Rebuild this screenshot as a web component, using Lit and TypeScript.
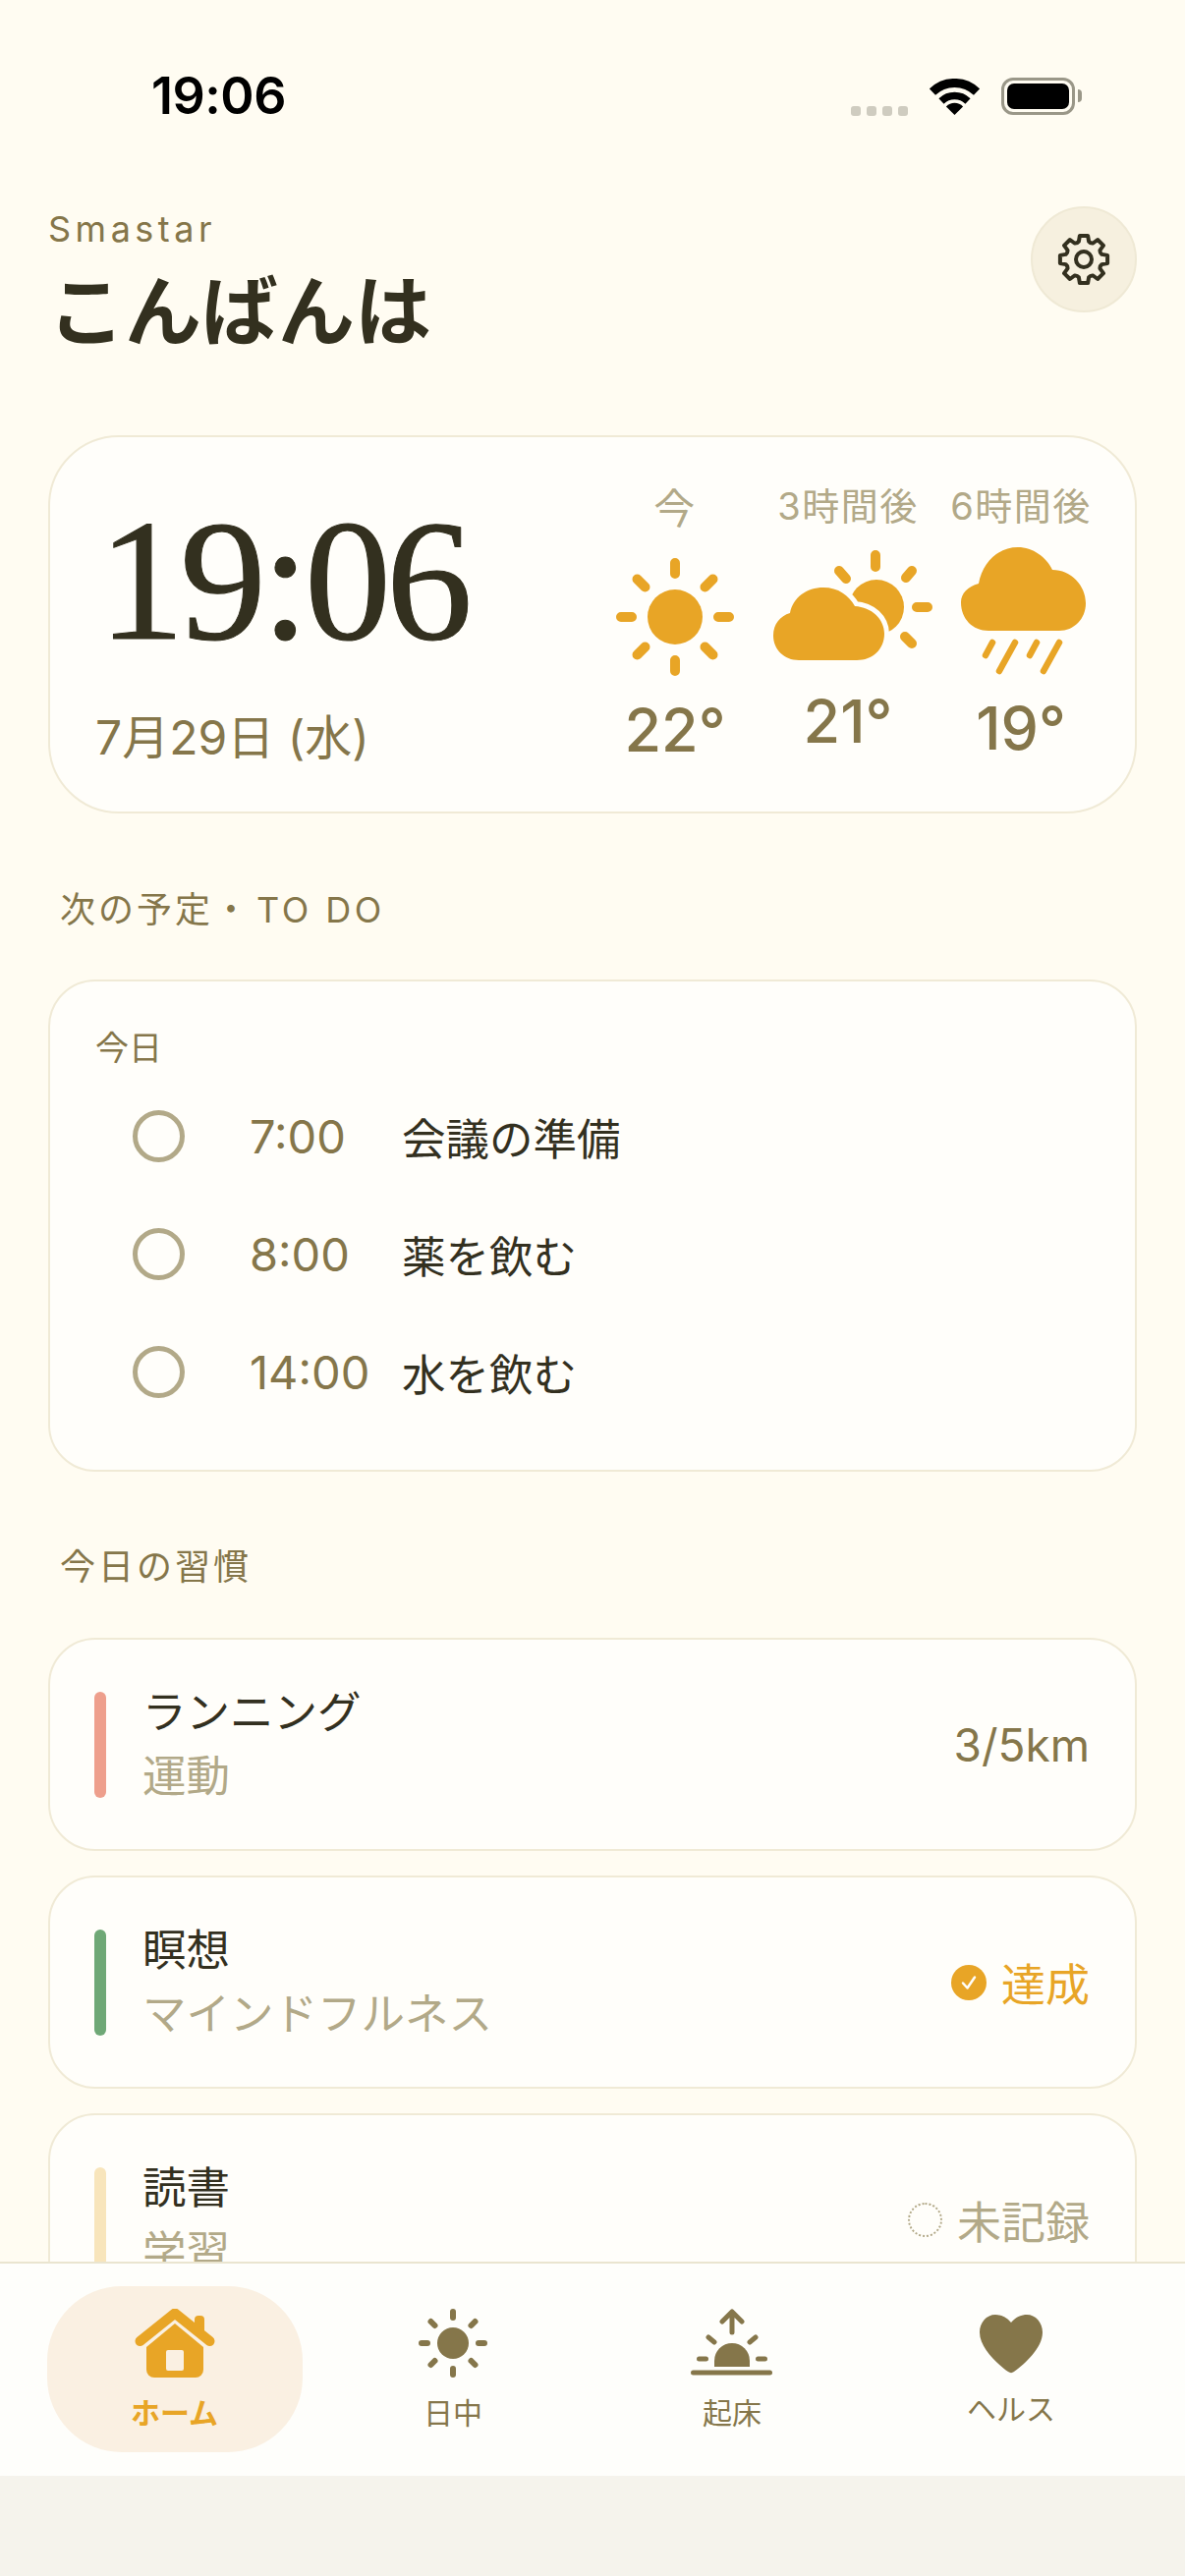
import { LitElement, css, html, svg } from 'lit';
import { customElement } from 'lit/decorators.js';

const forecast = [
  { label: '今', temp: '22°', cls: 'f-now', box: '619 555 136 135' },
  { label: '3時間後', temp: '21°', cls: 'f-three', box: '795 555 136 135' },
  { label: '6時間後', temp: '19°', cls: 'f-six', box: '971 555 136 135' },
];

const todos = [
  { time: '7:00', text: '会議の準備' },
  { time: '8:00', text: '薬を飲む' },
  { time: '14:00', text: '水を飲む' },
];

const weatherIcons = [
  svg`<g stroke="#e8a526" stroke-width="10" stroke-linecap="round" fill="none">
      <path d="M687 573v11M687 672v11M632 628h11M731 628h11M648.500 589.500l8 8M717.500 658.500l8 8M725.500 589.500l-8 8M656.500 658.500l-8 8"/>
    </g>
    <circle cx="687" cy="628" r="28" fill="#e8a526"/>`,
  svg`<g stroke="#e8a526" stroke-width="10" stroke-linecap="round" fill="none">
      <path d="M891 565v12M933 618h11M928 581l-6 7M854 581l7 8M921 648l7 7"/>
    </g>
    <circle cx="892" cy="618" r="28" fill="#e8a526"/>
    <path d="M813 672C798 672 787 661 787 647C787 635 794 627 804 624C807 608 821 598 838 598C853 598 864 606 870 617C887 618 900 630 900 645C900 661 888 672 872 672Z" fill="#e8a526" stroke="#fffefa" stroke-width="10" paint-order="stroke"/>`,
  svg`<path d="M1006 642C990 642 978 630 978 613C978 604 985 597 996 594C1000 572 1016 557 1036 557C1051 557 1065 567 1071 580C1090 580 1105 596 1105 614C1105 630 1093 642 1078 642Z" fill="#e8a526"/>
    <path d="M1010 654l-7 13M1033 654l-16 29M1055 654l-7 13M1078 654l-16 29" stroke="#e8a526" stroke-width="6.500" stroke-linecap="round" fill="none"/>`,
];

// 8 tooth gear outline, centred on 27,27
function gearPath() {
  const pts: string[] = [];
  for (let i = 0; i < 8; i++) {
    const a = (i * Math.PI) / 4 - Math.PI / 2;
    const p = (r: number, d: number) =>
      `${(27 + r * Math.cos(a + d)).toFixed(1)} ${(27 + r * Math.sin(a + d)).toFixed(1)}`;
    pts.push(
      `${i === 0 ? 'M' : 'Q' + p(17.5, -Math.PI / 8) + ' '}${p(19, -0.27)}`,
      `L${p(24.5, -0.17)}`,
      `L${p(24.5, 0.17)}`,
      `L${p(19, 0.27)}`
    );
  }
  const a0 = -Math.PI / 2 - Math.PI / 8;
  const close = `Q${(27 + 17.5 * Math.cos(a0)).toFixed(1)} ${(27 + 17.5 * Math.sin(a0)).toFixed(1)} ${(27 + 19 * Math.cos(-Math.PI / 2 - 0.27)).toFixed(1)} ${(27 + 19 * Math.sin(-Math.PI / 2 - 0.27)).toFixed(1)}Z`;
  return pts.join('') + close;
}

@customElement('app-root')
export class AppRoot extends LitElement {
  static styles = css`
    :host {
      display: block;
      position: relative;
      width: 1206px;
      height: 2622px;
      overflow: hidden;
      background: #fffcf2;
      color: #33301f;
      font-family: Inter, 'Noto Sans CJK JP', sans-serif;
    }

    .status {
      display: flex;
      align-items: center;
      height: 196px;
      padding: 0 112px 0 154px;
      box-sizing: border-box;
    }

    .clock-small {
      font-size: 52px;
      font-weight: 600;
      color: #000;
      line-height: 60px;
      letter-spacing: -0.5px;
    }

    .status-right {
      margin-left: auto;
      display: flex;
      align-items: center;
    }

    .dots {
      display: flex;
      gap: 6px;
      margin: 30px 22px 0 0;
    }

    .dots span {
      width: 10px;
      height: 10px;
      border-radius: 3px;
      background: #cfccc0;
    }

    .battery {
      position: relative;
      width: 75px;
      height: 38px;
      margin-left: 22px;
      box-sizing: border-box;
      border: 3.500px solid #9a9788;
      border-radius: 12px;
      padding: 3px;
    }

    .battery i {
      display: block;
      height: 100%;
      border-radius: 7px;
      background: #000;
    }

    .battery::after {
      content: '';
      position: absolute;
      right: -10px;
      top: 9px;
      width: 4px;
      height: 13px;
      border-radius: 0 4px 4px 0;
      background: #9a9788;
    }

    main {
      padding: 0 49px;
    }

    header {
      display: flex;
      justify-content: space-between;
      align-items: flex-start;
      margin-top: 14px;
      height: 233px;
    }

    .brand {
      margin-top: 1px;
      font-size: 36px;
      line-height: 44px;
      letter-spacing: 4.500px;
      color: #85764a;
    }

    h1 {
      margin: 13px 0 0;
      font-size: 78px;
      line-height: 100px;
      font-weight: 700;
    }

    .gear {
      width: 108px;
      height: 108px;
      box-sizing: border-box;
      border-radius: 50%;
      background: #f6f0df;
      border: 2px solid #efe9d5;
      display: flex;
      align-items: center;
      justify-content: center;
    }

    .card {
      background: #fffefa;
      border: 2px solid #f0ead6;
      border-radius: 48px;
      box-sizing: border-box;
    }

    .hero {
      display: flex;
      justify-content: space-between;
      height: 385px;
      border-radius: 72px;
      padding: 0 48px 0 46px;
    }

    .big-time {
      margin: 41px 0 0 3px;
      font-family: 'Liberation Serif', serif;
      font-size: 176px;
      line-height: 210px;
      letter-spacing: -5px;
      -webkit-text-stroke: 1px #33301f;
      white-space: nowrap;
    }

    .date {
      margin-top: 25px;
      font-size: 48px;
      line-height: 60px;
      color: #85764a;
    }

    .forecast {
      display: flex;
      gap: 40px;
    }

    .slot {
      width: 136px;
      display: flex;
      flex-direction: column;
      align-items: center;
      padding-top: 45px;
    }

    .slot-label {
      height: 50px;
      font-size: 38px;
      line-height: 50px;
      letter-spacing: 1.500px;
      white-space: nowrap;
      color: #b2a988;
    }

    .f-now .slot-label {
      font-size: 42px;
      line-height: 56px;
    }

    .slot svg {
      margin-top: 15px;
      overflow: visible;
    }

    .slot-temp {
      font-size: 61px;
      line-height: 72px;
      font-weight: 500;
      color: #85764a;
    }

    .f-now .slot-temp {
      margin-top: 17px;
    }

    .f-three .slot-temp {
      margin-top: 8px;
    }

    .f-six .slot-temp {
      margin-top: 15px;
    }

    h2 {
      margin: 0;
      padding-left: 12px;
      font-size: 36px;
      line-height: 50px;
      font-weight: 400;
      letter-spacing: 3px;
      color: #85764a;
    }

    h2 span {
      margin-left: 5px;
      letter-spacing: 3.500px;
    }

    .next-title {
      margin-top: 73px;
    }

    .todo-card {
      height: 501px;
      margin-top: 46px;
      padding: 44px 46px 0;
    }

    .day {
      margin-bottom: 5px;
      font-size: 34px;
      line-height: 48px;
      color: #85764a;
    }

    .todo {
      display: flex;
      align-items: center;
      height: 120px;
      padding-left: 38px;
    }

    .radio {
      width: 53px;
      height: 53px;
      box-sizing: border-box;
      border-radius: 50%;
      border: 5px solid #b2a988;
      margin-right: 66px;
    }

    .todo-time {
      width: 155px;
      font-size: 47px;
      color: #85764a;
    }

    .todo-text {
      font-size: 44.500px;
    }

    .habit-title {
      margin-top: 72px;
    }

    .habits {
      display: flex;
      flex-direction: column;
      gap: 25px;
      margin-top: 47px;
    }

    .habit {
      display: flex;
      align-items: center;
      height: 217px;
      flex: none;
      padding: 0 46px 0 45px;
    }

    .bar {
      width: 12px;
      height: 108px;
      border-radius: 6px;
      margin-right: 37px;
    }

    .h-run .bar {
      background: #ee9f8c;
    }

    .h-calm .bar {
      background: #6fa876;
    }

    .h-read .bar {
      background: #f8e5bb;
    }

    .habit-name,
    .habit-sub {
      font-size: 44.500px;
      line-height: 65px;
    }

    .habit-sub {
      color: #b2a988;
    }

    .habit-state {
      margin-left: auto;
      display: flex;
      align-items: center;
      gap: 15px;
      font-size: 45px;
      color: #b2a988;
    }

    .habit-state.value {
      font-size: 46px;
      color: #85764a;
    }

    .habit-state.done {
      color: #e8a526;
    }

    .ring {
      width: 35px;
      height: 35px;
      box-sizing: border-box;
      border-radius: 50%;
      border: 2px dotted #b2a988;
    }

    .bottom {
      position: absolute;
      left: 0;
      right: 0;
      bottom: 0;
    }

    nav {
      display: grid;
      grid-template-columns: repeat(4, 284px);
      justify-content: center;
      height: 218px;
      box-sizing: border-box;
      padding-top: 23px;
      border-top: 2.500px solid #eae5d0;
      background: #fefefb;
    }

    .tab {
      justify-self: center;
      width: 260px;
      height: 169px;
      border-radius: 76px;
      display: flex;
      flex-direction: column;
      align-items: center;
      padding-top: 23px;
      box-sizing: border-box;
      color: #85764a;
      font-size: 30px;
      line-height: 40px;
    }

    .tab svg {
      display: block;
    }

    .tab span {
      margin-top: 16px;
    }

    .tab.active {
      margin-left: 1px;
      background: #faf0e2;
      color: #e8a526;
      font-weight: 600;
    }

    .tab.health span {
      margin-top: 12px;
    }

    .home-bar {
      height: 102px;
      background: #f5f3ec;
    }
  `;

  render() {
    return html`
      <div class="status">
        <div class="clock-small">19:06</div>
        <div class="status-right">
          <div class="dots"><span></span><span></span><span></span><span></span></div>
          <svg width="51" height="37" viewBox="0 0 51 37">
            <path d="M2.900 13.600A32.500 32.500 0 0 1 48.100 13.600" stroke="#000" stroke-width="9" fill="none"/>
            <path d="M12 23A19.500 19.500 0 0 1 39 23" stroke="#000" stroke-width="7.500" fill="none"/>
            <path d="M25.500 37L16.900 28.400A12 12 0 0 1 34.100 28.400Z" fill="#000"/>
          </svg>
          <div class="battery"><i></i></div>
        </div>
      </div>

      <main>
        <header>
          <div>
            <div class="brand">Smastar</div>
            <h1>こんばんは</h1>
          </div>
          <div class="gear">
            <svg width="54" height="54" viewBox="0 0 54 54" fill="none" stroke="#33301f" stroke-width="4" stroke-linejoin="round">
              <path d=${gearPath()}/>
              <circle cx="27" cy="27" r="8"/>
            </svg>
          </div>
        </header>

        <section class="card hero">
          <div>
            <div class="big-time">19:06</div>
            <div class="date">7月29日 (水)</div>
          </div>
          <div class="forecast">
            ${forecast.map(
              (f, i) => html`
                <div class="slot ${f.cls}">
                  <div class="slot-label">${f.label}</div>
                  <svg width="136" height="135" viewBox=${f.box}>${weatherIcons[i]}</svg>
                  <div class="slot-temp">${f.temp}</div>
                </div>
              `
            )}
          </div>
        </section>

        <h2 class="next-title">次の予定・<span>TO DO</span></h2>
        <section class="card todo-card">
          <div class="day">今日</div>
          ${todos.map(
            (t) => html`
              <div class="todo">
                <div class="radio"></div>
                <div class="todo-time">${t.time}</div>
                <div class="todo-text">${t.text}</div>
              </div>
            `
          )}
        </section>

        <h2 class="habit-title">今日の習慣</h2>
        <div class="habits">
          <section class="card habit h-run">
            <div class="bar"></div>
            <div>
              <div class="habit-name">ランニング</div>
              <div class="habit-sub">運動</div>
            </div>
            <div class="habit-state value">3/5km</div>
          </section>
          <section class="card habit h-calm">
            <div class="bar"></div>
            <div>
              <div class="habit-name">瞑想</div>
              <div class="habit-sub">マインドフルネス</div>
            </div>
            <div class="habit-state done">
              <svg width="36" height="36" viewBox="0 0 36 36">
                <circle cx="18" cy="18" r="18" fill="#e8a526"/>
                <path d="M12 18.500l4.500 5L24 12.500" fill="none" stroke="#fffefa" stroke-width="2.500" stroke-linecap="round" stroke-linejoin="round"/>
              </svg>
              達成
            </div>
          </section>
          <section class="card habit h-read">
            <div class="bar"></div>
            <div>
              <div class="habit-name">読書</div>
              <div class="habit-sub">学習</div>
            </div>
            <div class="habit-state"><div class="ring"></div>未記録</div>
          </section>
        </div>
      </main>

      <div class="bottom">
        <nav>
          <div class="tab active">
            <svg width="90" height="70" viewBox="132 2350 90 70">
              <path d="M197 2370V2361a4 4 0 0 1 4-4h2a4 4 0 0 1 4 4v16Z" fill="#e8a526"/>
              <path d="M141.500 2383L177 2354.500L212.500 2383" fill="none" stroke="#e8a526" stroke-width="10" stroke-linecap="round" stroke-linejoin="round"/>
              <path d="M177 2365L206 2389V2412a8 8 0 0 1-8 8H156a8 8 0 0 1-8-8V2389Z" fill="#e8a526"/>
              <rect x="168" y="2392" width="18" height="21" rx="2" fill="#faf0e2"/>
            </svg>
            <span>ホーム</span>
          </div>
          <div class="tab">
            <svg width="90" height="70" viewBox="416 2350 90 70">
              <circle cx="461" cy="2385" r="16" fill="#85764a"/>
              <path d="M461 2353v6M461 2411v6M429 2385h6M487 2385h6M438.500 2363l4 4M483.500 2363l-4 4M438.500 2407l4-4M483.500 2407l-4-4" stroke="#85764a" stroke-width="6" stroke-linecap="round" fill="none"/>
            </svg>
            <span>日中</span>
          </div>
          <div class="tab">
            <svg width="90" height="70" viewBox="700 2348 90 70">
              <path d="M745 2372V2351M735 2361L745 2351L755 2361" stroke="#85764a" stroke-width="5" stroke-linecap="round" stroke-linejoin="round" fill="none"/>
              <path d="M721 2377l6 5M769 2377l-6 5M711.500 2399h7M771.500 2399h7" stroke="#85764a" stroke-width="5" stroke-linecap="round" fill="none"/>
              <path d="M727 2407V2401a18 18 0 0 1 36 0V2407Z" fill="#85764a"/>
              <path d="M705.500 2413H783.500" stroke="#85764a" stroke-width="5" stroke-linecap="round"/>
            </svg>
            <span>起床</span>
          </div>
          <div class="tab health">
            <svg width="90" height="70" viewBox="983 2350 90 70">
              <path d="M1028 2364C1023 2358 1017 2356 1012 2356C1003 2356 996 2364 996 2374C996 2390 1014 2406 1025 2414C1027 2415.500 1029 2415.500 1031 2414C1042 2406 1060 2390 1060 2374C1060 2364 1053 2356 1044 2356C1039 2356 1033 2358 1028 2364Z" fill="#85764a"/>
            </svg>
            <span>ヘルス</span>
          </div>
        </nav>
        <div class="home-bar"></div>
      </div>
    `;
  }
}

declare global {
  interface HTMLElementTagNameMap {
    'app-root': AppRoot;
  }
}
